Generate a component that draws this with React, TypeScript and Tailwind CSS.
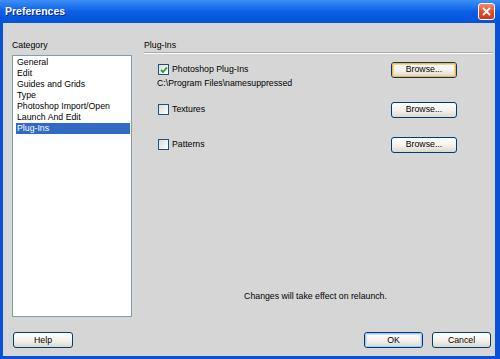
import React from 'react'

const categories = [
  'General',
  'Edit',
  'Guides and Grids',
  'Type',
  'Photoshop Import/Open',
  'Launch And Edit',
  'Plug-Ins',
]

function XpButton({
  label,
  width,
  focus,
}: {
  label: string
  width: string
  focus?: 'orange' | 'blue'
}) {
  const inner =
    focus === 'orange'
      ? 'border-[#f8b33e] shadow-[inset_0_0_0_1px_#fcd58a]'
      : focus === 'blue'
        ? 'border-[#a9c4f2] shadow-[inset_0_0_0_1px_#cfe0fb]'
        : 'border-transparent'
  return (
    <div
      className={`${width} h-[16px] rounded-[3px] border border-[#003c74] bg-gradient-to-b from-white via-[#f4f3ee] to-[#dcd8cc]`}
    >
      <div
        className={`flex h-full w-full items-center justify-center rounded-[2px] border ${inner} text-[8.75px] leading-none text-black`}
      >
        {label}
      </div>
    </div>
  )
}

function Checkbox({ checked }: { checked?: boolean }) {
  return (
    <div className="flex h-[11px] w-[11px] shrink-0 items-center justify-center border border-[#1c5180] bg-gradient-to-br from-[#dcdcd7] to-white">
      {checked && (
        <svg width="8" height="8" viewBox="0 0 8 8">
          <path d="M1 4 L3 6 L7 1.5" fill="none" stroke="#21a121" strokeWidth="1.8" />
        </svg>
      )}
    </div>
  )
}

export default function App() {
  return (
    <div
      className="flex h-[359px] w-[500px] flex-col overflow-hidden bg-[#0a50d8] text-black"
      style={{ fontFamily: '"Liberation Sans", Arial, sans-serif' }}
    >
      {/* Title bar */}
      <div className="flex h-[23px] shrink-0 items-center justify-between bg-gradient-to-b from-[#3d8ff7] via-[#0a5fe6] to-[#0652d8] pl-[5px] pr-[5px]">
        <span className="text-[10.5px] font-bold text-white [text-shadow:1px_1px_0_#0a2a8a]">
          Preferences
        </span>
        <div className="flex h-[17px] w-[17px] items-center justify-center rounded-[3px] border border-white bg-gradient-to-b from-[#f08a6a] via-[#e2502d] to-[#c9391a]">
          <svg width="9" height="9" viewBox="0 0 9 9">
            <path d="M1 1 L8 8 M8 1 L1 8" stroke="white" strokeWidth="1.8" />
          </svg>
        </div>
      </div>

      {/* Body */}
      <div className="ml-[3px] mr-[5px] mb-[3px] flex flex-1 flex-col bg-[#d6d6d6] text-[8.75px]">
        <div className="flex h-[294px]">
          {/* Category */}
          <div className="ml-[9px] flex w-[120px] flex-col pt-[16px]">
            <div className="h-[13px] leading-[13px]">Category</div>
            <div className="mt-[3px] flex-1 border border-[#7f9db9] bg-white pl-[3px] pr-[1px] pt-[1px]">
              {categories.map((c) => (
                <div
                  key={c}
                  className={`h-[11px] pl-[1px] leading-[11px] ${
                    c === 'Plug-Ins' ? 'bg-[#316ac5] text-white' : ''
                  }`}
                >
                  {c}
                </div>
              ))}
            </div>
          </div>

          {/* Plug-Ins panel */}
          <div className="ml-[12px] mr-[2px] flex flex-1 flex-col pt-[16px]">
            <div className="h-[13px] leading-[13px]">Plug-Ins</div>
            <div className="h-[2px] border-t border-[#a8a8a8] border-b border-b-white" />

            <div className="mt-[8px] flex h-[15px] items-center pl-[14px] pr-[36px]">
              <Checkbox checked />
              <span className="ml-[3px] flex-1">Photoshop Plug-Ins</span>
              <XpButton label="Browse..." width="w-[66px]" focus="orange" />
            </div>
            <div className="h-[13px] pl-[13px] leading-[13px]">C:\Program Files\namesuppressed</div>

            <div className="mt-[12px] flex h-[15px] items-center pl-[14px] pr-[36px]">
              <Checkbox />
              <span className="ml-[3px] flex-1">Textures</span>
              <XpButton label="Browse..." width="w-[66px]" />
            </div>

            <div className="mt-[20px] flex h-[15px] items-center pl-[14px] pr-[36px]">
              <Checkbox />
              <span className="ml-[3px] flex-1">Patterns</span>
              <XpButton label="Browse..." width="w-[66px]" />
            </div>

            <div className="mt-[138px] h-[13px] pr-[6px] text-center leading-[13px]">
              Changes will take effect on relaunch.
            </div>
          </div>
        </div>

        {/* Footer */}
        <div className="mt-[15px] flex items-center pl-[10px] pr-[4px]">
          <XpButton label="Help" width="w-[60px]" />
          <div className="flex-1" />
          <XpButton label="OK" width="w-[59px]" focus="blue" />
          <div className="w-[9px]" />
          <XpButton label="Cancel" width="w-[59px]" />
        </div>
      </div>
    </div>
  )
}
